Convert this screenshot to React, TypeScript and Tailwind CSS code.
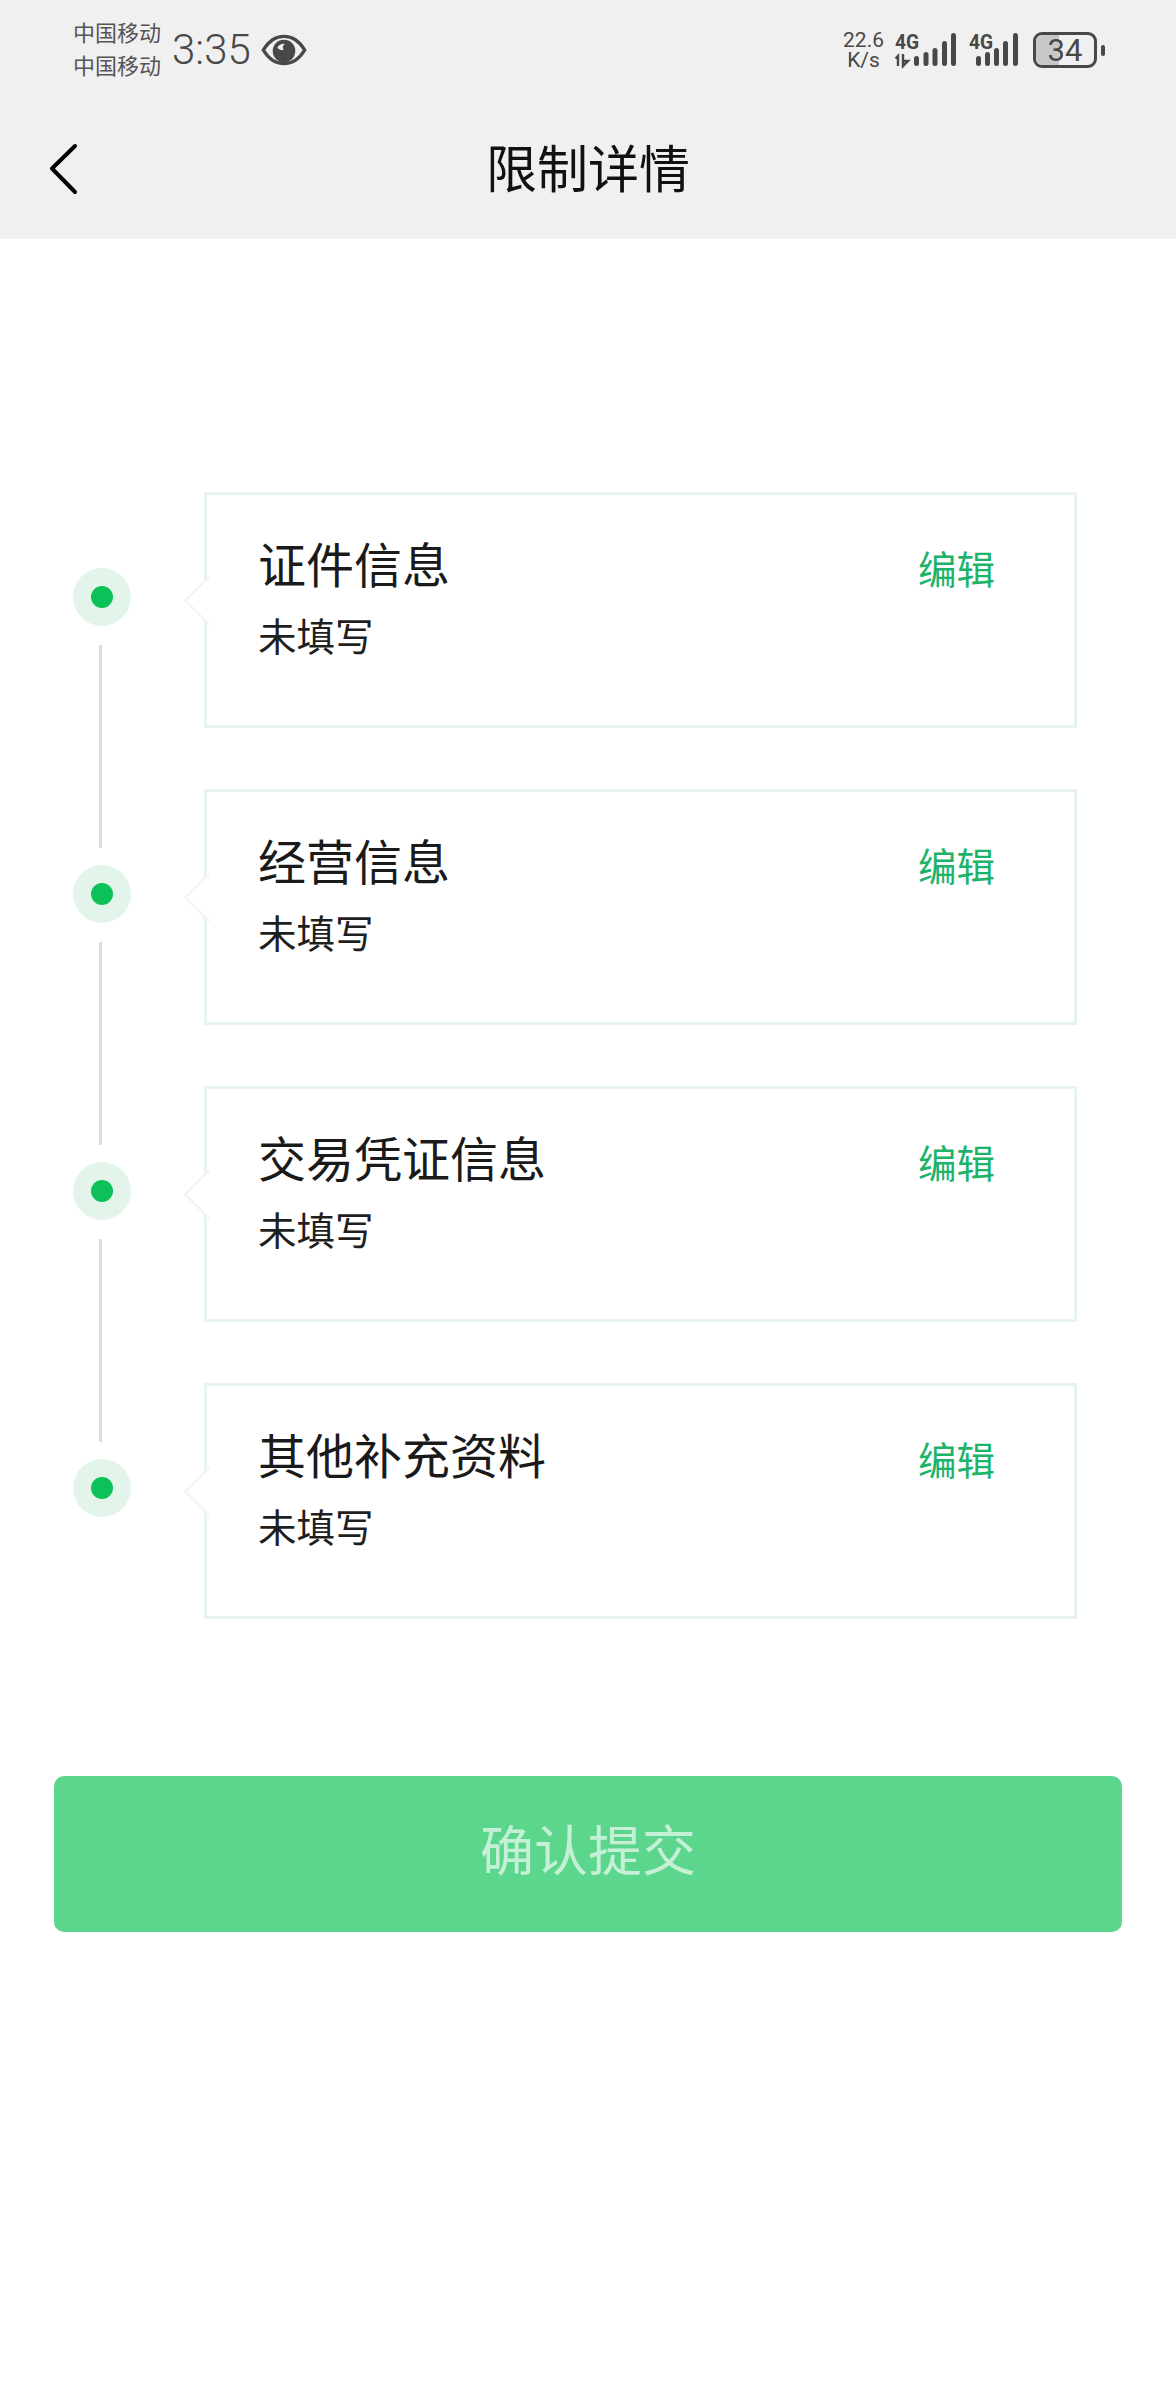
import React from "react";

const FONT = '"Noto Sans CJK SC", "Noto Sans", sans-serif';

const sections = ["证件信息", "经营信息", "交易凭证信息", "其他补充资料"];

const Bars = ({ xs }: { xs: number[] }) => {
  const tops = [56, 52, 48, 41, 33];
  return (
    <>
      {xs.map((x, i) => (
        <rect key={x} x={x} y={tops[i]} width="5" height={66 - tops[i]} rx="2.5" fill="#484848" />
      ))}
    </>
  );
};

const EyeIcon = () => (
  <svg width="46" height="32" viewBox="0 0 48 34" className="ml-[10px]">
    <path d="M2 17C8 7 15 2.5 24 2.5S40 7 46 17C40 27 33 31.5 24 31.5S8 27 2 17Z" fill="none" stroke="#484848" strokeWidth="3.6" />
    <circle cx="24" cy="18" r="12" fill="#484848" />
    <path d="M17 14.5C19 11 22 10 25 10.5C22.5 12 22 15 24 17C21 17.5 18.500 16.500 17 14.5Z" fill="#f0f0f0" />
  </svg>
);

const SignalIcons = () => (
  <svg width="128" height="44" viewBox="894 28 128 44" className="ml-[9px]">
    <text x="896" y="49" fontFamily="Roboto, sans-serif" fontWeight="700" fontSize="20" textLength="24" lengthAdjust="spacingAndGlyphs" fill="#484848">4G</text>
    <path d="M899 66V56l-2.500 2.500M904 54v12l5-5h-5" fill="none" stroke="#484848" strokeWidth="2.400" />
    <Bars xs={[915, 924.5, 933.5, 943, 952]} />
    <text x="970" y="49" fontFamily="Roboto, sans-serif" fontWeight="700" fontSize="20" textLength="24" lengthAdjust="spacingAndGlyphs" fill="#484848">4G</text>
    <Bars xs={[977, 986, 995, 1004, 1014]} />
  </svg>
);

const Battery = () => (
  <div className="ml-[12px] flex items-center">
    <div className="relative flex h-[36px] w-[64px] items-center justify-center overflow-hidden rounded-[9px] border-[3px] border-[#484848]">
      <div className="absolute inset-y-0 left-0 w-[23px] bg-[#c8c8c8]" />
      <span className="relative text-[31px] leading-none text-[#484848]" style={{ fontFamily: "Roboto, sans-serif" }}>34</span>
    </div>
    <div className="ml-[4px] h-[11px] w-[4px] rounded-[2px] bg-[#484848]" />
  </div>
);

const Section = ({ title }: { title: string }) => (
  <div className="relative flex h-[236px] items-start justify-between border-[3px] border-[#e8f3ef] bg-white pl-[51px] pr-[79px]">
    <div className="absolute left-[-16px] top-[88px] h-[35px] w-[35px] rotate-45 border-b-2 border-l-2 border-[#eef5f2] bg-white" />
    <div className="relative pt-[39px]">
      <div className="text-[48px] leading-[56px] text-[#1a1a1a]">{title}</div>
      <div className="mt-[24px] text-[38.500px] leading-[40px] text-[#1f1f1f]">未填写</div>
    </div>
    <div className="relative mt-[52px] text-[38.500px] leading-[40px] text-[#1db368]">编辑</div>
  </div>
);

const App: React.FC = () => {
  return (
    <div className="h-[2400px] w-[1176px] overflow-hidden bg-white" style={{ fontFamily: FONT }}>
      {/* Status bar + nav */}
      <div className="h-[239px] bg-[#f0f0f0]">
        <div className="flex h-[100px] items-center pl-[73px] pr-[71px]">
          <div className="-mt-[5px] text-[22px] leading-[33px] text-[#555555]">
            <div>中国移动</div>
            <div>中国移动</div>
          </div>
          <div className="ml-[11px] text-[42px] leading-none text-[#484848]" style={{ fontFamily: "Roboto, sans-serif", fontWeight: 300 }}>3:35</div>
          <EyeIcon />
          <div className="-mt-[1px] ml-auto text-center text-[21px] leading-[20px] text-[#484848]" style={{ fontFamily: "Roboto, sans-serif" }}>
            <div>22.6</div>
            <div>K/s</div>
          </div>
          <SignalIcons />
          <Battery />
        </div>
        <div className="grid h-[139px] grid-cols-[1fr_auto_1fr] items-center pb-[2px]">
          <svg width="30" height="52" viewBox="0 0 30 52" className="ml-[48px]">
            <path d="M27 3L4 25.500L27 49" fill="none" stroke="#000000" strokeWidth="4" strokeLinecap="round" strokeLinejoin="round" />
          </svg>
          <div className="-mt-[5px] text-[51px] leading-none text-[#111111]">限制详情</div>
          <div />
        </div>
      </div>

      {/* Timeline and cards */}
      <div className="flex pl-[73px] pt-[253px]">
        <div className="flex w-[58px] flex-col items-center pt-[76px]">
          {sections.map((s, i) => (
            <React.Fragment key={s}>
              <div className="flex h-[58px] w-[58px] shrink-0 items-center justify-center rounded-full bg-[#e3f5ea]">
                <div className="h-[22px] w-[22px] rounded-full bg-[#0cc158]" />
              </div>
              {i < sections.length - 1 && (
                <div className="mb-[17px] mr-[4px] mt-[19px] h-[203px] w-[3px] bg-[#dcdde0]" />
              )}
            </React.Fragment>
          ))}
        </div>
        <div className="ml-[73px] flex w-[873px] flex-col gap-[61px]">
          {sections.map((s) => (
            <Section key={s} title={s} />
          ))}
        </div>
      </div>

      <div className="mx-[54px] mt-[157px] flex h-[156px] items-center justify-center rounded-[10px] bg-[#5bd68c] pb-[13px] text-[54px] text-[#c5f0d6]">
        确认提交
      </div>
    </div>
  );
};

export default App;
